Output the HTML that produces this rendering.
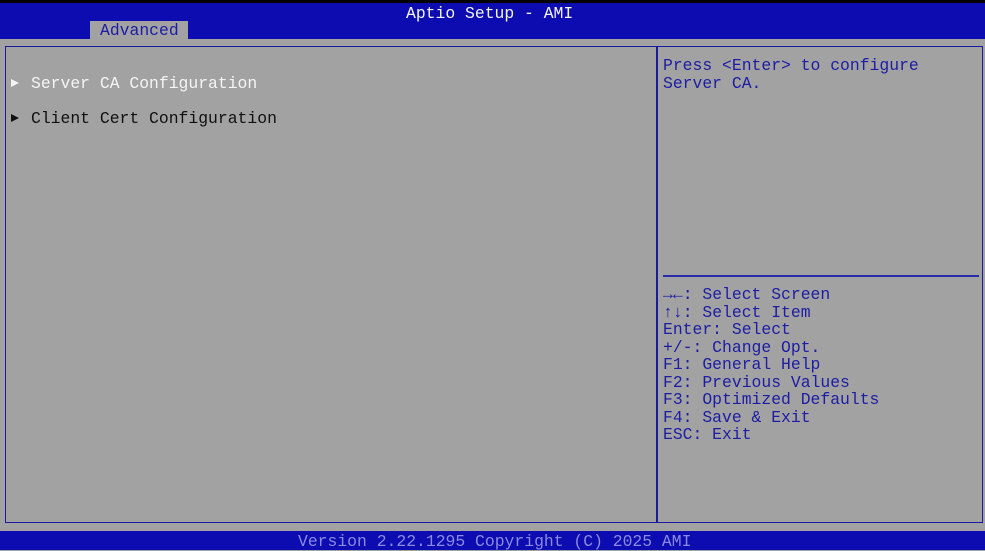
<!DOCTYPE html>
<html><head><style>
html,body{margin:0;padding:0;}
body{width:985px;height:550px;position:relative;background:#a2a2a2;overflow:hidden;font-family:"Liberation Mono","DejaVu Sans Mono",monospace;font-size:16.4px;}
.t{position:absolute;white-space:pre;line-height:18px;}
#top{position:absolute;left:0;top:0;width:985px;height:3px;background:#000;}
#hdr{position:absolute;left:0;top:3px;width:985px;height:36px;background:#0c0cb0;}
#tab{position:absolute;left:90px;top:21px;width:98px;height:18px;background:#a2a2a2;}
#box{position:absolute;left:5px;top:46px;width:976px;height:475px;border:1.5px solid #1a1a9c;}
#div{position:absolute;left:656px;top:46px;width:2px;height:477px;background:#1a1a9c;}
#hr{position:absolute;left:663px;top:275px;width:316px;height:1.5px;background:#2a2aa8;}
#ftr{position:absolute;left:0;top:531px;width:985px;height:19px;background:#0c0cb0;}
.b{color:#1c1ca4;}
.w{color:#f4f4f4;}
.k{color:#101010;}
.f{color:#8a8ae0;}
.ar{position:absolute;width:0;height:0;border-top:4.5px solid transparent;border-bottom:4.5px solid transparent;border-left:8px solid;}
</style></head><body>
<div id="top"></div>
<div id="hdr"></div>
<div class="t w" style="left:406px;top:5px;">Aptio Setup - AMI</div>
<div id="tab"></div>
<div class="t b" style="left:100px;top:22px;">Advanced</div>
<div id="box"></div>
<div id="div"></div>
<div id="hr"></div>
<div class="ar" style="left:11px;top:79px;color:#f4f4f4;"></div>
<div class="t w" style="left:31px;top:75px;">Server CA Configuration</div>
<div class="ar" style="left:11px;top:114px;color:#101010;"></div>
<div class="t k" style="left:31px;top:110px;">Client Cert Configuration</div>
<div class="t b" style="left:663px;top:57px;line-height:17.5px;">Press &lt;Enter&gt; to configure
Server CA.</div>
<div class="t b" style="left:663px;top:286px;line-height:17.5px;"><b>→←</b>: Select Screen
<b>↑↓</b>: Select Item
Enter: Select
+/-: Change Opt.
F1: General Help
F2: Previous Values
F3: Optimized Defaults
F4: Save &amp; Exit
ESC: Exit</div>
<div id="ftr"></div>
<div class="t f" style="left:298px;top:533px;">Version 2.22.1295 Copyright (C) 2025 AMI</div>
</body></html>
